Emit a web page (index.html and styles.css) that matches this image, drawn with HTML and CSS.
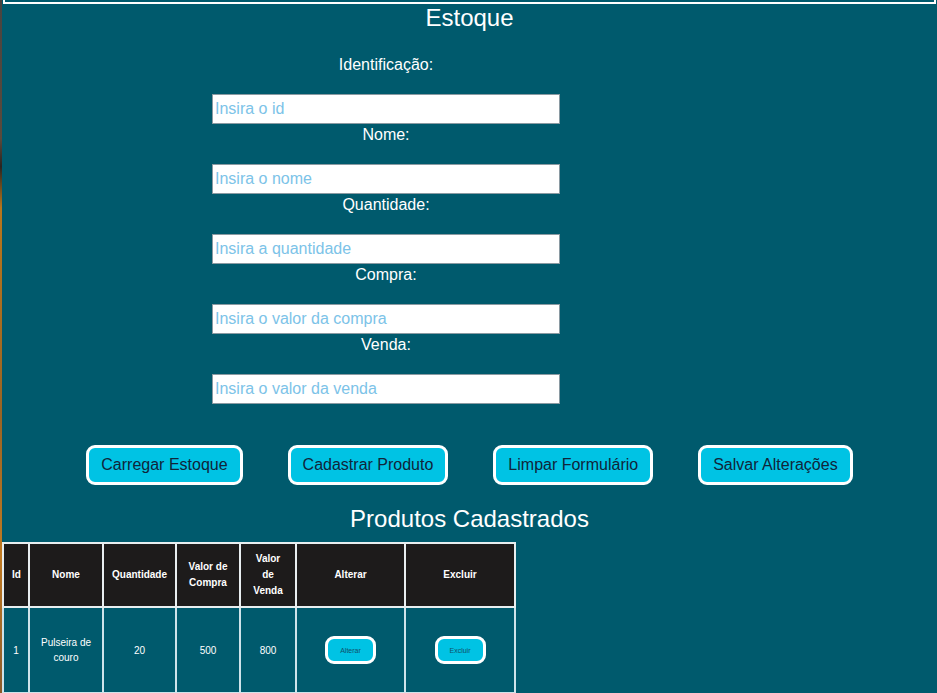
FILE: index.html
```html
<!DOCTYPE html>
<html lang="pt-BR">
<head>
<meta charset="utf-8">
<title>Estoque</title>
<link rel="stylesheet" href="styles.css">
</head>
<body>
<div class="page">
  <div class="strip"></div>
  <main class="main">
    <div class="topbox"></div>
    <h1 class="title">Estoque</h1>
    <form class="form">
      <label class="label" for="id">Identificação:</label>
      <input class="field" id="id" type="text" placeholder="Insira o id">
      <label class="label" for="nome">Nome:</label>
      <input class="field" id="nome" type="text" placeholder="Insira o nome">
      <label class="label" for="qtd">Quantidade:</label>
      <input class="field" id="qtd" type="text" placeholder="Insira a quantidade">
      <label class="label" for="compra">Compra:</label>
      <input class="field" id="compra" type="text" placeholder="Insira o valor da compra">
      <label class="label" for="venda">Venda:</label>
      <input class="field" id="venda" type="text" placeholder="Insira o valor da venda">
    </form>
    <div class="actions">
      <button class="btn" type="button">Carregar Estoque</button>
      <button class="btn" type="button">Cadastrar Produto</button>
      <button class="btn" type="button">Limpar Formulário</button>
      <button class="btn" type="button">Salvar Alterações</button>
    </div>
    <h2 class="subtitle">Produtos Cadastrados</h2>
    <table class="table">
      <colgroup>
        <col class="c-id"><col class="c-nome"><col class="c-qtd"><col class="c-compra"><col class="c-venda"><col class="c-alt"><col class="c-exc">
      </colgroup>
      <thead>
        <tr>
          <th>Id</th>
          <th>Nome</th>
          <th>Quantidade</th>
          <th>Valor de Compra</th>
          <th>Valor de Venda</th>
          <th>Alterar</th>
          <th>Excluir</th>
        </tr>
      </thead>
      <tbody>
        <tr>
          <td>1</td>
          <td>Pulseira de couro</td>
          <td>20</td>
          <td>500</td>
          <td>800</td>
          <td><button class="btn-sm" type="button">Alterar</button></td>
          <td><button class="btn-sm" type="button">Excluir</button></td>
        </tr>
      </tbody>
    </table>
  </main>
</div>
</body>
</html>
```

FILE: styles.css
```css
html, body {
  margin: 0;
  padding: 0;
}
body {
  font-family: "Liberation Sans", Arial, sans-serif;
  background: #005a6d;
  color: #ffffff;
}
.page {
  display: flex;
  min-height: 693px;
}
.strip {
  width: 2px;
  flex: none;
  background: linear-gradient(180deg, #4a4440 0%, #5a4a3c 20%, #2a2420 24%, #b8761c 30%, #9a6424 60%, #c07a22 80%, #8a5a2a 100%);
}
.main {
  flex: 1;
  background: #005a6d;
  overflow: hidden;
}
.topbox {
  height: 2px;
  margin: 0 1px 0 1px;
  border: 2px solid #ffffff;
  border-top: none;
}
.title {
  margin: 0;
  font-size: 24px;
  font-weight: normal;
  line-height: 28px;
  text-align: center;
}
.form {
  width: 348px;
  margin: 22px 0 0 210px;
  display: flex;
  flex-direction: column;
}
.label {
  display: block;
  font-size: 16px;
  line-height: 22px;
  margin-bottom: 18px;
  text-align: center;
}
.field {
  box-sizing: border-box;
  width: 348px;
  height: 30px;
  margin: 0;
  padding: 0 2px;
  border: 1px solid #8a9aa2;
  background: #ffffff;
  font-family: "Liberation Sans", Arial, sans-serif;
  font-size: 16px;
  color: #1a2a3a;
}
.field::placeholder {
  color: #7cc3e8;
}
.actions {
  display: flex;
  justify-content: center;
  gap: 45px;
  margin-top: 41px;
}
.btn {
  box-sizing: border-box;
  height: 40px;
  padding: 0 12px;
  border: 3px solid #ffffff;
  border-radius: 9px;
  background: #00c3e4;
  color: #10253a;
  font-family: "Liberation Sans", Arial, sans-serif;
  font-size: 16px;
}
.subtitle {
  margin: 20px 0 0 0;
  font-size: 24px;
  font-weight: normal;
  line-height: 28px;
  text-align: center;
}
.table {
  margin: 9px 0 0 0;
  border-collapse: collapse;
  table-layout: fixed;
  width: 512px;
}
.c-id { width: 26px; }
.c-nome { width: 74px; }
.c-qtd { width: 73px; }
.c-compra { width: 64px; }
.c-venda { width: 56px; }
.c-alt { width: 109px; }
.c-exc { width: 110px; }
.table th,
.table td {
  border: 2px solid #e8eef0;
  text-align: center;
  font-size: 10px;
  line-height: 16px;
  padding: 7px 8px;
}
.table th {
  background: #1d1b1b;
  font-weight: bold;
  height: 48px;
}
.table td {
  border-color: #cfe3ea;
  height: 70px;
  line-height: 15px;
}
.btn-sm {
  box-sizing: border-box;
  width: 51px;
  height: 28px;
  padding: 0;
  border: 3px solid #ffffff;
  border-radius: 9px;
  background: #00c3e4;
  color: #10506a;
  font-family: "Liberation Sans", Arial, sans-serif;
  font-size: 7px;
}
```
